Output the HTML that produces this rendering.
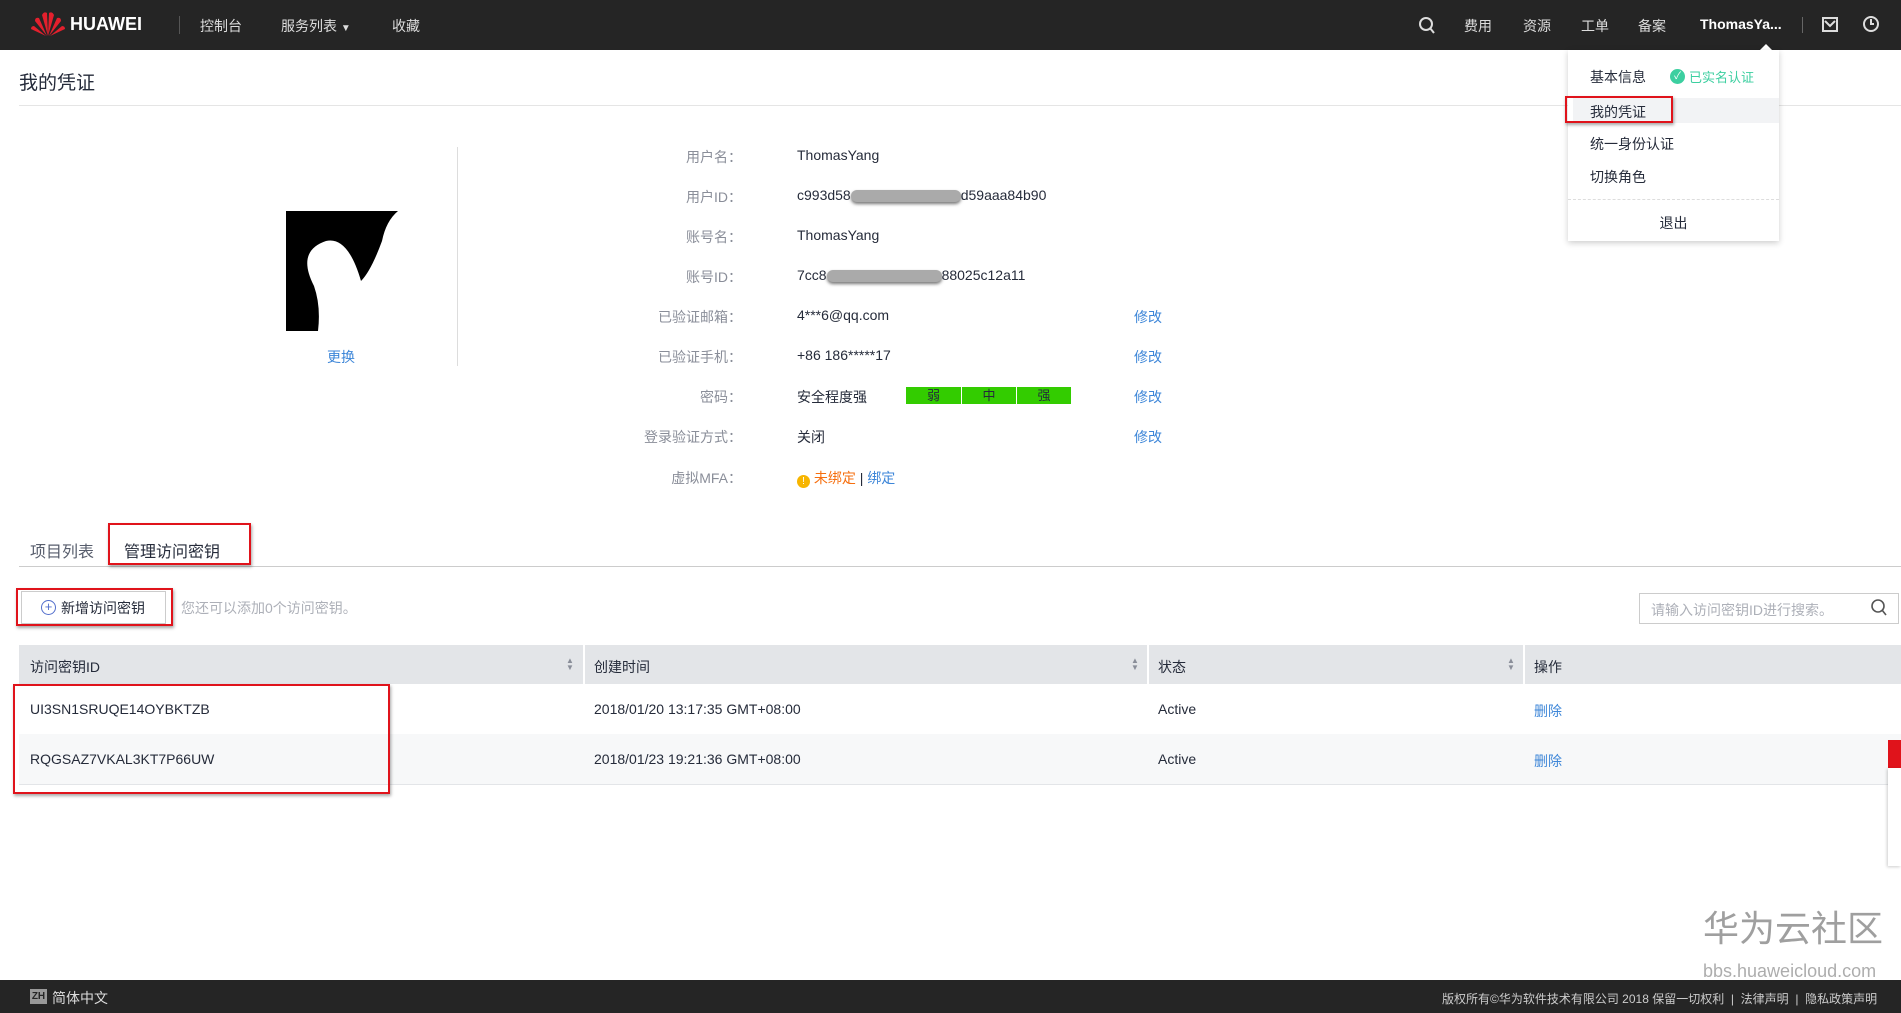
<!DOCTYPE html>
<html><head><meta charset="utf-8"><style>
*{margin:0;padding:0;box-sizing:border-box}
body{width:1901px;height:1013px;position:relative;overflow:hidden;background:#fff;font-family:"Liberation Sans","Noto Sans CJK SC",sans-serif;font-size:14px;color:#252b3a}
.a{position:absolute;white-space:nowrap}
.nav{left:0;top:0;width:1901px;height:50px;background:#252525}
.nt{color:#ddd;font-size:14px;top:16px}
.lbl{color:#8a8e99;text-align:right;width:200px;left:542px}
.val{left:797px;color:#252b3a}
.lnk{color:#3d86d8}
.red{border:2px solid #e0131b;box-shadow:1px 2px 3px rgba(0,0,0,.35)}
.dd{font-size:14px;color:#252b3a;left:1590px}
.th{color:#252b3a;top:657px}
.arr{font-size:8px;color:#8a8e99;line-height:7px;top:657px}
</style></head><body>
<div class="a nav"></div>
<svg class="a" style="left:30px;top:11px" width="36" height="27" viewBox="0 0 36 27">
<g fill="#e3202d"><path d="M18 25 L12 4 Q14 0 17 2 Z"/><path d="M18 25 L24 4 Q22 0 19 2 Z"/><path d="M17 25 L5 10 Q5 6 9 7 Z"/><path d="M19 25 L31 10 Q31 6 27 7 Z"/><path d="M16 25 L1 18 Q1 15 4 15 Z"/><path d="M20 25 L35 18 Q35 15 32 15 Z"/></g></svg>
<div class="a" style="left:70px;top:14px;color:#fff;font-weight:bold;font-size:18px">HUAWEI</div>
<div class="a" style="left:179px;top:16px;width:1px;height:18px;background:#555"></div>
<div class="a nt" style="left:200px">控制台</div>
<div class="a nt" style="left:281px">服务列表 <span style="font-size:10px">▼</span></div>
<div class="a nt" style="left:392px">收藏</div>
<svg class="a" style="left:1418px;top:16px" width="18" height="19" viewBox="0 0 18 19"><circle cx="8" cy="8" r="6" fill="none" stroke="#ddd" stroke-width="2"/><path d="M12 12 L16 17" stroke="#ddd" stroke-width="2"/></svg>
<div class="a nt" style="left:1464px">费用</div>
<div class="a nt" style="left:1523px">资源</div>
<div class="a nt" style="left:1581px">工单</div>
<div class="a nt" style="left:1638px">备案</div>
<div class="a nt" style="left:1700px;color:#fff;font-weight:bold">ThomasYa...</div>
<div class="a" style="left:1802px;top:17px;width:1px;height:16px;background:#666"></div>
<svg class="a" style="left:1822px;top:17px" width="16" height="15" viewBox="0 0 16 15"><rect x="1" y="1" width="14" height="13" fill="none" stroke="#ddd" stroke-width="2"/><path d="M3 4 L8 9 L13 4" fill="none" stroke="#ddd" stroke-width="2"/></svg>
<svg class="a" style="left:1862px;top:15px" width="18" height="18" viewBox="0 0 18 18"><circle cx="9" cy="9" r="7" fill="none" stroke="#ddd" stroke-width="2"/><path d="M9 4 V9 H12" fill="none" stroke="#ddd" stroke-width="2"/></svg>
<div class="a" style="left:1760px;top:44px;width:0;height:0;border-left:6px solid transparent;border-right:6px solid transparent;border-bottom:6px solid #fff"></div>

<div class="a" style="left:19px;top:68px;font-size:19px;color:#252b3a">我的凭证</div>
<div class="a" style="left:19px;top:105px;width:1882px;height:1px;background:#e5e5e5"></div>

<svg class="a" style="left:286px;top:211px" width="120" height="120" viewBox="0 0 120 120"><rect width="120" height="120" fill="#fff"/><path d="M0 0 H112 Q100 10 96 30 Q85 60 75 70 Q62 25 40 30 Q10 40 28 75 Q35 95 32 120 H0 Z" fill="#000"/></svg>
<div class="a lnk" style="left:327px;top:347px">更换</div>
<div class="a" style="left:457px;top:147px;width:1px;height:219px;background:#ddd"></div>

<div class="a lbl" style="top:147px">用户名：</div><div class="a val" style="top:147px">ThomasYang</div>
<div class="a lbl" style="top:187px">用户ID：</div><div class="a val" style="top:187px">c993d58<span style="display:inline-block;width:110px;height:12px;background:#aaa;border-radius:6px;vertical-align:middle;box-shadow:0 2px 3px #777"></span>d59aaa84b90</div>
<div class="a lbl" style="top:227px">账号名：</div><div class="a val" style="top:227px">ThomasYang</div>
<div class="a lbl" style="top:267px">账号ID：</div><div class="a val" style="top:267px">7cc8<span style="display:inline-block;width:115px;height:12px;background:#aaa;border-radius:6px;vertical-align:middle;box-shadow:0 2px 3px #777"></span>88025c12a11</div>
<div class="a lbl" style="top:307px">已验证邮箱：</div><div class="a val" style="top:307px">4***6@qq.com</div><div class="a lnk" style="left:1134px;top:307px">修改</div>
<div class="a lbl" style="top:347px">已验证手机：</div><div class="a val" style="top:347px">+86 186*****17</div><div class="a lnk" style="left:1134px;top:347px">修改</div>
<div class="a lbl" style="top:387px">密码：</div><div class="a val" style="top:387px">安全程度强</div>
<div class="a" style="left:906px;top:387px;width:55px;height:17px;background:#33cc00;text-align:center;font-size:13px;line-height:17px">弱</div>
<div class="a" style="left:962px;top:387px;width:54px;height:17px;background:#33cc00;text-align:center;font-size:13px;line-height:17px">中</div>
<div class="a" style="left:1017px;top:387px;width:54px;height:17px;background:#33cc00;text-align:center;font-size:13px;line-height:17px">强</div>
<div class="a lnk" style="left:1134px;top:387px">修改</div>
<div class="a lbl" style="top:427px">登录验证方式：</div><div class="a val" style="top:427px">关闭</div><div class="a lnk" style="left:1134px;top:427px">修改</div>
<div class="a lbl" style="top:468px">虚拟MFA：</div>
<div class="a val" style="top:468px"><span style="display:inline-block;width:13px;height:13px;border-radius:50%;background:#f7b500;color:#fff;font-size:10px;text-align:center;line-height:13px;vertical-align:-1px">!</span> <span style="color:#f66f0f">未绑定</span> | <span class="lnk">绑定</span></div>

<div class="a" style="left:1568px;top:50px;width:211px;height:191px;background:#fff;box-shadow:0 2px 6px rgba(0,0,0,.2)"></div>
<div class="a" style="left:1573px;top:98px;width:206px;height:25px;background:#f2f3f5"></div>
<div class="a dd" style="top:67px">基本信息</div>
<div class="a" style="left:1670px;top:69px;width:15px;height:15px;border-radius:50%;background:#3ccfa0;color:#fff;font-size:10px;text-align:center;line-height:15px">✓</div>
<div class="a" style="left:1689px;top:67px;color:#3ccfa0;font-size:13px">已实名认证</div>
<div class="a dd" style="top:102px">我的凭证</div>
<div class="a dd" style="top:134px">统一身份认证</div>
<div class="a dd" style="top:167px">切换角色</div>
<div class="a" style="left:1568px;top:199px;width:211px;border-top:1px dashed #ddd"></div>
<div class="a" style="left:1568px;top:213px;width:211px;text-align:center">退出</div>
<div class="a red" style="left:1565px;top:96px;width:108px;height:27px"></div>

<div class="a" style="left:30px;top:538px;font-size:16px;color:#575d6c">项目列表</div>
<div class="a" style="left:124px;top:538px;font-size:16px;color:#252b3a">管理访问密钥</div>
<div class="a" style="left:19px;top:566px;width:1882px;height:1px;background:#ccc"></div>
<div class="a" style="left:114px;top:563px;width:115px;height:2px;background:#526ecc"></div>
<div class="a red" style="left:108px;top:523px;width:143px;height:42px"></div>

<div class="a" style="left:21px;top:591px;width:145px;height:33px;border:1px solid #ccc;background:#fff"></div>
<div class="a" style="left:41px;top:600px;width:15px;height:15px;border:1.5px solid #526ecc;border-radius:50%;color:#526ecc;font-size:13px;line-height:12px;text-align:center">+</div>
<div class="a" style="left:61px;top:598px;font-size:14px">新增访问密钥</div>
<div class="a red" style="left:16px;top:588px;width:157px;height:38px"></div>
<div class="a" style="left:181px;top:598px;color:#adb0b8;font-size:14px">您还可以添加0个访问密钥。</div>

<div class="a" style="left:1639px;top:593px;width:260px;height:31px;border:1px solid #ccc"></div>
<div class="a" style="left:1651px;top:600px;color:#adb0b8;font-size:14px">请输入访问密钥ID进行搜索。</div>
<svg class="a" style="left:1870px;top:598px" width="18" height="20" viewBox="0 0 18 20"><circle cx="8" cy="8" r="6" fill="none" stroke="#555" stroke-width="1.6"/><path d="M12 12 L16 17" stroke="#555" stroke-width="1.6"/></svg>

<div class="a" style="left:19px;top:645px;width:1882px;height:39px;background:#e3e5e8"></div>
<div class="a" style="left:583px;top:645px;width:2px;height:39px;background:#fff"></div>
<div class="a" style="left:1147px;top:645px;width:2px;height:39px;background:#fff"></div>
<div class="a" style="left:1523px;top:645px;width:2px;height:39px;background:#fff"></div>
<div class="a th" style="left:30px">访问密钥ID</div>
<div class="a th" style="left:594px">创建时间</div>
<div class="a th" style="left:1158px">状态</div>
<div class="a th" style="left:1534px">操作</div>
<div class="a arr" style="left:566px">▲<br>▼</div>
<div class="a arr" style="left:1131px">▲<br>▼</div>
<div class="a arr" style="left:1507px">▲<br>▼</div>
<div class="a" style="left:19px;top:734px;width:1882px;height:50px;background:#f7f8f9"></div>
<div class="a" style="left:19px;top:784px;width:1882px;height:1px;background:#e3e5e8"></div>
<div class="a" style="left:30px;top:701px">UI3SN1SRUQE14OYBKTZB</div>
<div class="a" style="left:594px;top:701px">2018/01/20 13:17:35 GMT+08:00</div>
<div class="a" style="left:1158px;top:701px">Active</div>
<div class="a lnk" style="left:1534px;top:701px">删除</div>
<div class="a" style="left:30px;top:751px">RQGSAZ7VKAL3KT7P66UW</div>
<div class="a" style="left:594px;top:751px">2018/01/23 19:21:36 GMT+08:00</div>
<div class="a" style="left:1158px;top:751px">Active</div>
<div class="a lnk" style="left:1534px;top:751px">删除</div>
<div class="a red" style="left:13px;top:684px;width:377px;height:110px"></div>

<div class="a" style="left:1888px;top:740px;width:13px;height:28px;background:#e0131b"></div>
<div class="a" style="left:1888px;top:768px;width:13px;height:98px;background:#fff;box-shadow:-1px 1px 3px rgba(0,0,0,.2)"></div>

<div class="a" style="left:1703px;top:900px;font-size:36px;color:#888;opacity:.8">华为云社区</div>
<div class="a" style="left:1703px;top:961px;font-size:18px;color:#999;opacity:.8">bbs.huaweicloud.com</div>

<div class="a" style="left:0;top:980px;width:1901px;height:33px;background:#252525"></div>
<div class="a" style="left:30px;top:989px;width:17px;height:15px;background:#999;color:#252525;font-size:10px;font-weight:bold;text-align:center;line-height:15px">ZH</div>
<div class="a" style="left:52px;top:988px;color:#ddd;font-size:14px">简体中文</div>
<div class="a" style="left:1442px;top:990px;color:#ccc;font-size:12px">版权所有©华为软件技术有限公司 2018 保留一切权利 &nbsp;|&nbsp; 法律声明 &nbsp;|&nbsp; 隐私政策声明</div>
</body></html>
